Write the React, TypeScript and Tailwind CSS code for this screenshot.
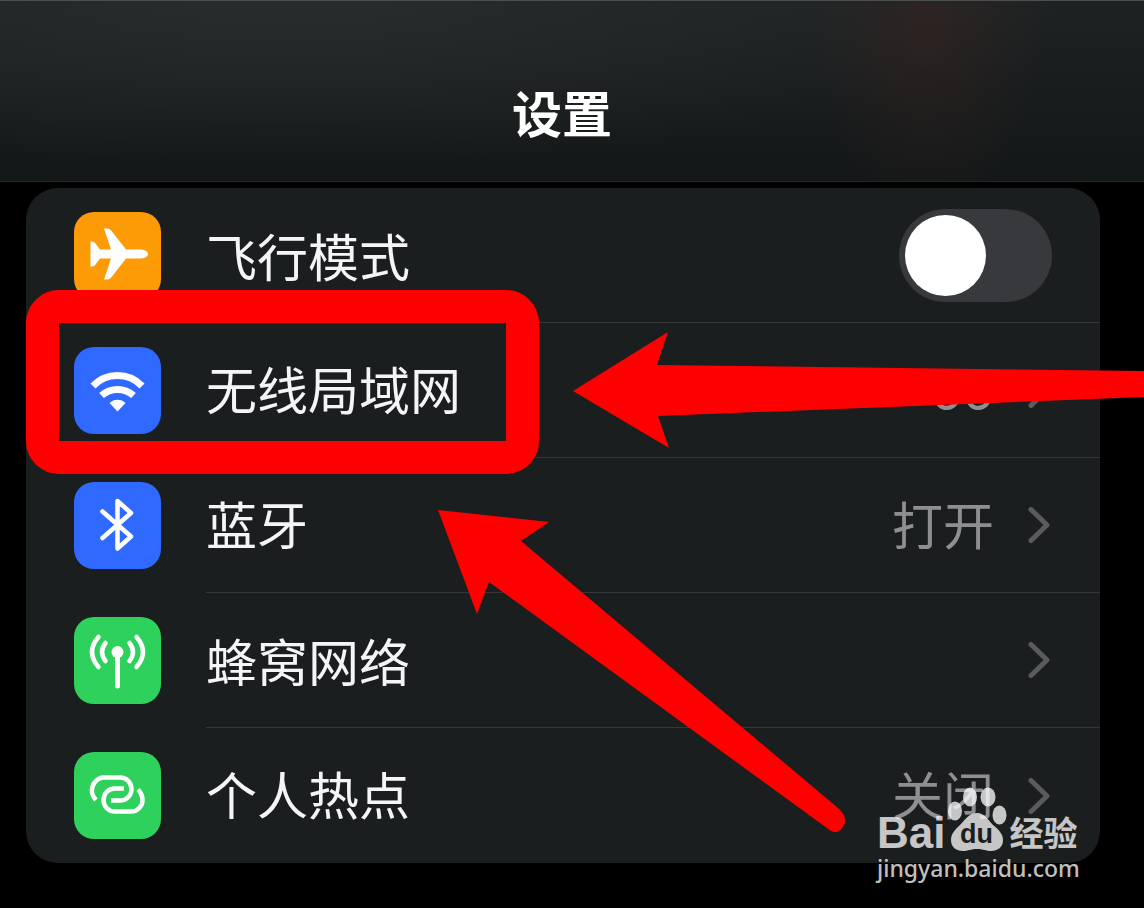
import React from 'react'

interface SettingI {
  id: string;
  title: string;
  color: string;
  icon: React.ReactNode;
  value?: string;
  toggle?: boolean;
  marked?: boolean;
}

const settings: SettingI[] = [
  {
    id: 'airplane',
    title: '飞行模式',
    color: 'bg-[#fd9b06]',
    toggle: true,
    icon: (
      <path
        d="M74 42C74 39 70 37.500 66 37.500H52L38 19.500C36.500 17.500 35 16.500 33 16.500H30L37 37.500H26L21.500 31.500C20.500 30 19.500 29.500 16.500 29.500V54.500C19.500 54.500 20.500 54 21.500 52.500L26 46.500H37L30 67.500H33C35 67.500 36.500 66.500 38 64.500L52 46.500H66C70 46.500 74 45 74 42Z"
        fill="white"
      />
    ),
  },
  {
    id: 'wifi',
    title: '无线局域网',
    color: 'bg-[#3069ff]',
    value: '66',
    marked: true,
    icon: (
      <>
        <path d="M19 39A34 34 0 0 1 68 39" stroke="white" strokeWidth="7" />
        <path d="M27.500 48.500A24 24 0 0 1 59.500 48.500" stroke="white" strokeWidth="7" />
        <path d="M35.500 56C39.500 51.500 47.500 51.500 51.500 56L43.500 64.500Z" fill="white" />
      </>
    ),
  },
  {
    id: 'bluetooth',
    title: '蓝牙',
    color: 'bg-[#3069ff]',
    value: '打开',
    icon: (
      <path d="M28.500 29.500L57 54.500L43.500 66.500V19L57 31L28.500 56" stroke="white" strokeWidth="4.500" strokeLinecap="round" strokeLinejoin="round" />
    ),
  },
  {
    id: 'cellular',
    title: '蜂窝网络',
    color: 'bg-[#2fd15d]',
    icon: (
      <>
        <circle cx="43.5" cy="35" r="6" fill="white" />
        <path d="M43.500 35V69" stroke="white" strokeWidth="5" strokeLinecap="round" />
        <path d="M31.500 26Q24.500 35 31.500 44M55.500 26Q62.500 35 55.500 44" stroke="white" strokeWidth="4.500" strokeLinecap="round" />
        <path d="M24.500 20Q11.500 35 24.500 50M62.500 20Q75.500 35 62.500 50" stroke="white" strokeWidth="4.500" strokeLinecap="round" />
      </>
    ),
  },
  {
    id: 'hotspot',
    title: '个人热点',
    color: 'bg-[#2fd15d]',
    value: '关闭',
    icon: (
      <>
        <path d="M22 48C16.500 42 17 35 21 30C23.500 27 26.500 25.500 30 25.500H46C53 25.500 57.500 31 57.500 37C57.500 43 53 48.500 46 48.500H37" stroke="white" strokeWidth="4.500" />
        <path d="M50 36.500H41C34 36.500 29.500 42 29.500 48C29.500 54 34 59.500 41 59.500H57C64 59.500 68.500 54 68.500 48C68.500 44 67 40.500 64 37.500" stroke="white" strokeWidth="4.500" />
      </>
    ),
  },
]

function Chevron() {
  return (
    <svg width="24" height="36" viewBox="0 0 24 36" fill="none" aria-hidden="true">
      <path d="M3 2.500L19 18L3 33.500" stroke="#5a5b5f" strokeWidth="5" strokeLinecap="round" strokeLinejoin="round" />
    </svg>
  )
}

function SettingRow({ setting }: { setting: SettingI }) {
  const content = (
    <>
      <svg className={`size-[87px] shrink-0 rounded-[20px] ${setting.color}`} viewBox="0 0 87 87" fill="none" aria-hidden="true">
        {setting.icon}
      </svg>
      <span className="flex h-full flex-1 items-center gap-[34px] border-b border-[#35373a] pr-12 group-last:border-b-0">
        <span className="flex flex-1 items-baseline justify-between text-[51px]">
          <span className="text-[#f5f5f7]">{setting.title}</span>
          {setting.value && (
            <span className="font-['Inter','Noto_Sans_CJK_SC',sans-serif] text-[#8e8e93]">{setting.value}</span>
          )}
        </span>
        {setting.toggle ? (
          <input
            id={setting.id}
            type="checkbox"
            role="switch"
            className="h-[93px] w-[153px] appearance-none rounded-full bg-[#38393c] p-1.5 before:block before:size-[81px] before:rounded-full before:bg-white checked:bg-[#2fd15d] checked:before:ml-auto"
          />
        ) : (
          <Chevron />
        )}
      </span>
    </>
  )

  return (
    <li className="group relative h-[135px]">
      {setting.toggle ? (
        <label htmlFor={setting.id} className="flex h-full items-center gap-[45px] pl-12">{content}</label>
      ) : (
        <a href={`#${setting.id}`} className="flex h-full items-center gap-[45px] pl-12">{content}</a>
      )}
      {setting.marked && (
        <div className="pointer-events-none absolute -top-[33px] left-0 z-10 h-[184px] w-[513px] rounded-[33px] border-[33px] border-[#ff0000]" />
      )}
    </li>
  )
}

function Arrows() {
  return (
    <svg className="pointer-events-none absolute top-0 left-0 z-10" width="1144" height="908" viewBox="0 0 1144 908" fill="#ff0000" aria-hidden="true">
      <path d="M573 391L668 332L657 365L1144 371V397L658 416L669 448Z" />
      <path d="M438 510L549 522L521 541L838 808Q848 817 844 825Q839 835 831 831L489 582L477 614Z" />
    </svg>
  )
}

function Watermark() {
  return (
    <div className="pointer-events-none absolute top-[786px] left-[877px] z-20 text-white opacity-75">
      <div className="flex h-[68px] items-end">
        <span className="font-['Liberation_Sans',sans-serif] text-[44px] leading-[42px] font-bold">Bai</span>
        <svg width="64" height="68" viewBox="0 0 64 68" aria-hidden="true">
          <g fill="white">
            <ellipse cx="10" cy="25" rx="7" ry="9.500" />
            <ellipse cx="25" cy="11" rx="7" ry="9.500" />
            <ellipse cx="43" cy="11" rx="7.500" ry="9.500" />
            <ellipse cx="54.500" cy="29" rx="7" ry="9.500" />
            <path d="M32 27C40 27 43 34 48 39C54 44 58 48 58 54C58 61 53 65 46 65C41 65 38 63 32 63C26 63 23 65 18 65C11 65 6 61 6 54C6 47 11 43 15 39C21 33 24 27 32 27Z" />
          </g>
          <text x="15" y="57" fill="#1b1e1f" fontSize="27" fontWeight="700" fontFamily="Liberation Sans, sans-serif">du</text>
        </svg>
        <span className="text-[34px] leading-[44px] font-bold">经验</span>
      </div>
      <div className="font-['Noto_Sans',sans-serif] text-[23px] leading-[28px] font-medium">jingyan.baidu.com</div>
    </div>
  )
}

export default function App() {
  return (
    <main className="relative min-h-screen overflow-hidden bg-black font-['Noto_Sans_CJK_SC',sans-serif]">
      <header className="flex h-[182px] items-center justify-center border-t border-b border-t-[#4b4f50] border-b-[#25282a] bg-[radial-gradient(110px_200px_at_81%_10%,#3a252077,transparent),radial-gradient(ellipse_at_25%_0%,#292c2d,transparent_65%),linear-gradient(#1f2223,#141718)] pt-10 pr-5">
        <h1 className="text-[50px] font-bold text-white">设置</h1>
      </header>

      <ul className="mt-1.5 mr-11 ml-[26px] rounded-[32px] bg-[#1b1e1f]">
        {settings.map((setting) => (
          <SettingRow key={setting.id} setting={setting} />
        ))}
      </ul>

      <Arrows />
      <Watermark />
    </main>
  )
}
